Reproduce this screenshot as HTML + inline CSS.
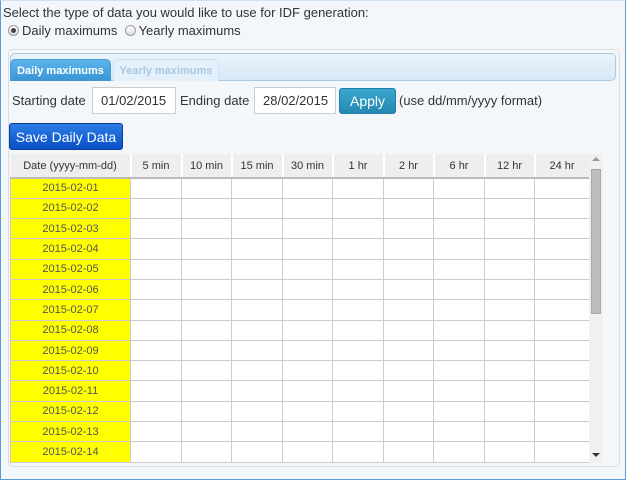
<!DOCTYPE html>
<html><head><meta charset="utf-8"><style>
*{box-sizing:border-box;margin:0;padding:0}
body{width:626px;height:480px;overflow:hidden;background:#f3f6fa;font-family:"Liberation Sans",sans-serif;color:#333;position:relative}
.frame{position:absolute;left:0;top:0;width:626px;height:480px;border:1px solid #5b9bd5;border-top-color:#cfe0f0}
.a{position:absolute;white-space:nowrap}
.radio{display:inline-block;width:11px;height:11px;border:1px solid #999;border-radius:50%;background:linear-gradient(#fff,#ddd);vertical-align:-1px;position:relative;margin-right:3px}
.radio.on::after{content:"";position:absolute;left:2px;top:2px;width:5px;height:5px;border-radius:50%;background:#444}
.panel{position:absolute;left:8px;top:49px;width:612px;height:418px;border:1px solid #ddd;border-radius:5px;background:#f4f7fa}
.tabbar{position:absolute;left:10px;top:53px;width:606px;height:28px;border:1px solid #a8cbe6;border-radius:5px;background:linear-gradient(#eaf3fb,#d7e9f7)}
.tab1{position:absolute;left:10px;top:59px;width:101px;height:22px;border:1px solid #4a9fd8;border-bottom:none;border-radius:5px 5px 0 0;background:linear-gradient(#5cb4ea,#3a95d6);color:#fff;font-weight:bold;font-size:11px;text-align:center;line-height:22px}
.tab2{position:absolute;left:113px;top:59px;width:106px;height:22px;border:1px solid #cfe2f2;border-bottom:none;border-radius:5px 5px 0 0;background:#e4f0fa;color:#a9c8e0;font-weight:bold;font-size:11px;text-align:center;line-height:22px}
.inp{position:absolute;top:87px;height:27px;border:1px solid #ccc;background:#fff;font-size:13px;line-height:25px;padding-left:8px}
.apply{position:absolute;left:339px;top:88px;width:57px;height:26px;border:1px solid #1f7fa8;border-radius:3px;background:linear-gradient(#3aa6cf,#2588b3);color:#fff;font-size:14px;text-align:center;line-height:24px}
.save{position:absolute;left:9px;top:123px;width:114px;height:27px;border:1px solid #0b3e99;border-radius:3px;background:linear-gradient(#2b7de6,#0a4fc7);color:#fff;font-size:14px;text-align:center;line-height:26px}
table{position:absolute;left:10px;top:154px;border-collapse:collapse;table-layout:fixed;width:579px;font-size:11px}
th{height:24px;background:#eee;font-weight:normal;border-right:2px solid #fff;border-bottom:2px solid #bbb;color:#333}
td{height:20.3px;border:1px solid #ccc;background:#fff;text-align:center;color:#555;font-size:11px}
td.d{background:#ffff00;border-color:#ccc}
.sb{position:absolute;left:589px;top:154px;width:14px;height:309px;background:#f0f0f0}
.th{position:absolute;left:591px;top:169px;width:10px;height:145px;background:#bdbdbd;border:1px solid #a8a8a8}
</style></head><body>
<div class="a" style="left:3px;top:5px;font-size:13px">Select the type of data you would like to use for IDF generation:</div>
<div class="a" style="left:8px;top:23px;font-size:13px"><span class="radio on"></span>Daily maximums &nbsp;<span class="radio"></span>Yearly maximums</div>
<div class="panel"></div>
<div class="tabbar"></div>
<div class="tab1">Daily maximums</div>
<div class="tab2">Yearly maximums</div>
<div class="a" style="left:12px;top:93px;font-size:13px">Starting date</div>
<div class="inp" style="left:92px;width:84px">01/02/2015</div>
<div class="a" style="left:180px;top:93px;font-size:13px">Ending date</div>
<div class="inp" style="left:254px;width:82px">28/02/2015</div>
<div class="apply">Apply</div>
<div class="a" style="left:399px;top:93px;font-size:13px">(use dd/mm/yyyy format)</div>
<div class="save">Save Daily Data</div>
<table>
<colgroup><col style="width:120px"><col style="width:51px"><col style="width:50px"><col style="width:51px"><col style="width:50px"><col style="width:51px"><col style="width:50px"><col style="width:51px"><col style="width:50px"><col style="width:55px"></colgroup>
<tr><th>Date (yyyy-mm-dd)</th><th>5 min</th><th>10 min</th><th>15 min</th><th>30 min</th><th>1 hr</th><th>2 hr</th><th>6 hr</th><th>12 hr</th><th>24 hr</th></tr>
<tr><td class="d">2015-02-01</td><td></td><td></td><td></td><td></td><td></td><td></td><td></td><td></td><td></td></tr>
<tr><td class="d">2015-02-02</td><td></td><td></td><td></td><td></td><td></td><td></td><td></td><td></td><td></td></tr>
<tr><td class="d">2015-02-03</td><td></td><td></td><td></td><td></td><td></td><td></td><td></td><td></td><td></td></tr>
<tr><td class="d">2015-02-04</td><td></td><td></td><td></td><td></td><td></td><td></td><td></td><td></td><td></td></tr>
<tr><td class="d">2015-02-05</td><td></td><td></td><td></td><td></td><td></td><td></td><td></td><td></td><td></td></tr>
<tr><td class="d">2015-02-06</td><td></td><td></td><td></td><td></td><td></td><td></td><td></td><td></td><td></td></tr>
<tr><td class="d">2015-02-07</td><td></td><td></td><td></td><td></td><td></td><td></td><td></td><td></td><td></td></tr>
<tr><td class="d">2015-02-08</td><td></td><td></td><td></td><td></td><td></td><td></td><td></td><td></td><td></td></tr>
<tr><td class="d">2015-02-09</td><td></td><td></td><td></td><td></td><td></td><td></td><td></td><td></td><td></td></tr>
<tr><td class="d">2015-02-10</td><td></td><td></td><td></td><td></td><td></td><td></td><td></td><td></td><td></td></tr>
<tr><td class="d">2015-02-11</td><td></td><td></td><td></td><td></td><td></td><td></td><td></td><td></td><td></td></tr>
<tr><td class="d">2015-02-12</td><td></td><td></td><td></td><td></td><td></td><td></td><td></td><td></td><td></td></tr>
<tr><td class="d">2015-02-13</td><td></td><td></td><td></td><td></td><td></td><td></td><td></td><td></td><td></td></tr>
<tr><td class="d">2015-02-14</td><td></td><td></td><td></td><td></td><td></td><td></td><td></td><td></td><td></td></tr>
</table>
<div class="sb"></div>
<div class="th"></div>
<div class="a" style="left:592px;top:157px;width:0;height:0;border-left:4px solid transparent;border-right:4px solid transparent;border-bottom:4px solid #999"></div>
<div class="a" style="left:592px;top:453px;width:0;height:0;border-left:4px solid transparent;border-right:4px solid transparent;border-top:4px solid #333"></div>
<div class="frame"></div>
</body></html>
